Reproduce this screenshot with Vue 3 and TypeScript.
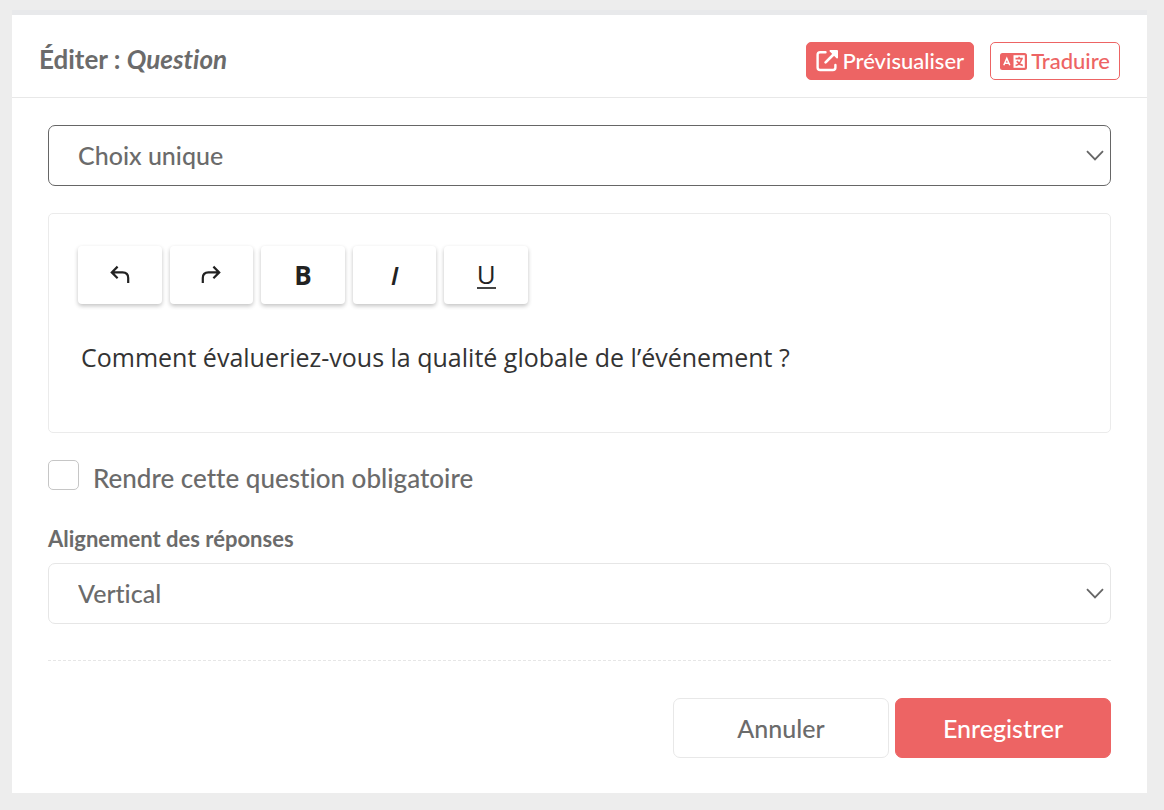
<script setup lang="ts">
import { ref } from 'vue'

const questionType = ref('Choix unique')
const questionTypes = ['Choix unique', 'Choix multiple', 'Texte libre']
const questionText = ref('Comment évalueriez-vous la qualité globale de l’événement ?')
const required = ref(false)
const alignment = ref('Vertical')
const alignments = ['Vertical', 'Horizontal']
</script>

<template>
  <main class="page">
    <form class="card" @submit.prevent>
      <header class="head">
        <h1 class="title">Éditer : <em>Question</em></h1>
        <div class="head-actions">
          <button type="button" class="small-btn filled">
            <svg class="open-icon" viewBox="0 0 22 22" aria-hidden="true">
              <path d="M9.5 2.2H4.2Q1.6 2.2 1.6 4.8V17.4Q1.6 20 4.2 20H16.8Q19.4 20 19.4 17.4V15" fill="none" stroke="currentColor" stroke-width="2.4" stroke-linecap="round" />
              <path d="M9.6 12.4L17 5" fill="none" stroke="currentColor" stroke-width="2.7" stroke-linecap="round" />
              <path d="M14.2 0H21Q22 0 22 1V7.8Q21.6 9 20.5 8.2L13.8 1.5Q13 .4 14.2 0Z" fill="currentColor" />
            </svg>
            <span>Prévisualiser</span>
          </button>
          <button type="button" class="small-btn outlined">
            <svg class="lang-icon" viewBox="0 0 27 17" aria-hidden="true">
              <rect width="27" height="17" rx="2.5" fill="currentColor" />
              <rect x="13.5" y="2.2" width="11.3" height="12.6" fill="#fff" />
              <path d="M3.8 12.2L6.8 5.4L9.8 12.2M5 10.2H8.6" fill="none" stroke="#fff" stroke-width="1.5" />
              <path d="M15.5 5.6H22.8M19.1 3.8V5.6M21.6 5.8Q20.6 10.8 15.6 12.6M16.9 8Q19 11.6 22.8 12.6" fill="none" stroke="currentColor" stroke-width="1.6" />
            </svg>
            <span>Traduire</span>
          </button>
        </div>
      </header>

      <div class="body">
        <div class="select-wrap">
          <select v-model="questionType" class="select active" aria-label="Type de question">
            <option v-for="t in questionTypes" :key="t">{{ t }}</option>
          </select>
          <svg class="chevron" viewBox="0 0 18 11" aria-hidden="true">
            <path d="M1 1.2L9 9.4L17 1.2" />
          </svg>
        </div>

        <section class="editor">
          <div class="toolbar">
            <button type="button" class="tool" aria-label="Annuler la frappe">
              <svg class="arrow" viewBox="0 0 20 20" aria-hidden="true">
                <path d="M7.6 1.6L1.8 7.4L7.6 13.2M2 7.4H12.6Q18.2 7.4 18.2 13V18" />
              </svg>
            </button>
            <button type="button" class="tool" aria-label="Rétablir">
              <svg class="arrow" viewBox="0 0 20 20" aria-hidden="true">
                <path d="M12.4 1.6L18.2 7.4L12.4 13.2M18 7.4H7.4Q1.8 7.4 1.8 13V18" />
              </svg>
            </button>
            <button type="button" class="tool bold" aria-label="Gras">B</button>
            <button type="button" class="tool italic" aria-label="Italique">I</button>
            <button type="button" class="tool" aria-label="Souligné"><span class="underlined">U</span></button>
          </div>
          <textarea v-model="questionText" class="text" rows="2" aria-label="Intitulé de la question" spellcheck="false"></textarea>
        </section>

        <div class="check-row">
          <input id="required" v-model="required" type="checkbox" class="check" />
          <label for="required">Rendre cette question obligatoire</label>
        </div>

        <label class="field-label" for="alignment">Alignement des réponses</label>
        <div class="select-wrap">
          <select id="alignment" v-model="alignment" class="select">
            <option v-for="a in alignments" :key="a">{{ a }}</option>
          </select>
          <svg class="chevron" viewBox="0 0 18 11" aria-hidden="true">
            <path d="M1 1.2L9 9.4L17 1.2" />
          </svg>
        </div>

        <footer class="footer">
          <button type="button" class="big-btn">Annuler</button>
          <button type="submit" class="big-btn primary">Enregistrer</button>
        </footer>
      </div>
    </form>
  </main>
</template>

<style>
body {
  margin: 0;
  background: #ededed;
}
</style>

<style scoped>
* {
  box-sizing: border-box;
}

.page {
  padding: 10px 17px 17px 12px;
  color: #6b6b6b;
  font-family: Lato, "Open Sans", sans-serif;
  font-size: 25px;
  font-weight: 500;
  font-variant-ligatures: none;
}

button,
select,
textarea {
  margin: 0;
  font: inherit;
  font-variant-ligatures: none;
  color: inherit;
}

button {
  cursor: pointer;
}

.card {
  background: #fff;
  border-top: 5px solid #e8e9eb;
}

.head {
  display: flex;
  justify-content: space-between;
  align-items: flex-start;
  padding: 27px 27px 17px;
  border-bottom: 1px solid #e8e8e8;
}

.title {
  margin: 0;
  font-size: 26px;
  line-height: 34px;
  font-weight: 700;
}

.head-actions {
  display: flex;
  gap: 16px;
}

.small-btn {
  display: flex;
  align-items: center;
  gap: 4px;
  height: 38px;
  padding: 0 9px;
  border: 1px solid #ed6464;
  border-radius: 5px;
  font-size: 22px;
  line-height: 36px;
}

.filled {
  background: #ed6464;
  color: #fff;
}

.outlined {
  background: #fff;
  color: #ed6464;
}

.open-icon {
  width: 22px;
  height: 22px;
}

.lang-icon {
  width: 27px;
  height: 17px;
}

.body {
  padding: 27px 36px 35px;
}

.select-wrap {
  position: relative;
}

.select {
  display: block;
  width: 100%;
  height: 61px;
  padding: 0 40px 2px 29px;
  border: 1px solid #e6e6e6;
  border-radius: 7px;
  background: #fff;
  appearance: none;
  outline: none;
}

.select.active {
  border-color: #666;
}

.chevron {
  position: absolute;
  top: 25px;
  right: 7px;
  width: 18px;
  height: 11px;
  fill: none;
  stroke: #666;
  stroke-width: 1.8;
  pointer-events: none;
}

.editor {
  margin-top: 27px;
  padding: 32px 29px 16px;
  border: 1px solid #ebebeb;
  border-radius: 5px;
}

.toolbar {
  display: grid;
  grid-template-columns: repeat(5, 1fr);
  gap: 8px;
  max-width: 450px;
}

.tool {
  display: flex;
  justify-content: center;
  align-items: center;
  height: 58px;
  padding: 0;
  border: 0;
  border-radius: 4px;
  background: #fff;
  color: #222;
  font-family: "Open Sans", sans-serif;
  font-size: 26px;
  font-weight: 400;
  box-shadow: 0 2px 4px rgba(0, 0, 0, 0.24);
}

.bold {
  font-weight: 700;
}

.italic {
  font-style: italic;
  font-weight: 600;
}

.arrow {
  width: 20px;
  height: 20px;
  fill: none;
  stroke: currentColor;
  stroke-width: 2.2;
}

.underlined {
  line-height: 26px;
  border-bottom: 2px solid #444;
}

.text {
  display: block;
  width: 100%;
  height: 80px;
  margin-top: 32px;
  padding: 3px;
  border: 0;
  outline: none;
  resize: none;
  background: transparent;
  color: #333;
  font-family: "Open Sans", sans-serif;
  font-size: 25px;
  font-weight: 400;
  line-height: 36px;
}

.check-row {
  display: flex;
  align-items: flex-start;
  gap: 14px;
  margin-top: 27px;
  font-size: 26px;
  line-height: 36px;
}

.check {
  flex: none;
  width: 31px;
  height: 30px;
  margin: 0;
  border: 1px solid #c6c6c6;
  border-radius: 5px;
  background: #fff;
  appearance: none;
}

.check:checked {
  background: #ed6464;
}

.field-label {
  display: block;
  margin-top: 28px;
  padding-bottom: 9px;
  font-size: 22px;
  font-weight: 700;
  line-height: 30px;
}

.footer {
  display: flex;
  justify-content: flex-end;
  gap: 6px;
  margin-top: 36px;
  padding-top: 37px;
  border-top: 1px dashed #e6e6e6;
}

.big-btn {
  width: 216px;
  height: 60px;
  border: 1px solid #e8e8e8;
  border-radius: 7px;
  background: #fff;
}

.primary {
  border-color: #ed6464;
  background: #ed6464;
  color: #fff;
}
</style>
